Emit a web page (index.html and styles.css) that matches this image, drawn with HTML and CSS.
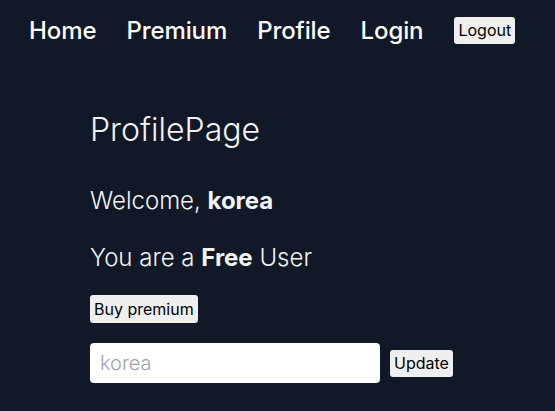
FILE: index.html
```html
<!DOCTYPE html>
<html>
<head>
<meta charset="utf-8">
<link rel="stylesheet" href="styles.css">
</head>
<body>
<nav class="nav">
  <a class="nav-link" href="#">Home</a>
  <a class="nav-link" href="#">Premium</a>
  <a class="nav-link" href="#">Profile</a>
  <a class="nav-link" href="#">Login</a>
  <button class="btn">Logout</button>
</nav>
<main class="profile">
  <h1 class="title">ProfilePage</h1>
  <p class="line">Welcome, <b>korea</b></p>
  <p class="line">You are a <b>Free</b> User</p>
  <div class="row"><button class="btn">Buy premium</button></div>
  <form class="form">
    <input class="input" type="text" placeholder="korea">
    <button class="btn" type="button">Update</button>
  </form>
</main>
</body>
</html>
```
FILE: styles.css
```css
html, body {
  margin: 0;
  background: #111827;
  color: #fff;
  font-family: Inter, "Noto Sans", sans-serif;
  height: 100%;
}
.nav {
  display: flex;
  align-items: center;
  gap: 30px;
  padding: 16px 29px;
}
.nav-link {
  color: #fff;
  text-decoration: none;
  font-size: 24px;
  line-height: 29px;
  font-weight: 500;
  letter-spacing: -0.1px;
}
.btn {
  font-family: Inter, sans-serif;
  font-size: 16px;
  background: #efefef;
  color: #000;
  border: none;
  border-radius: 3px;
  padding: 0 4px;
  height: 27px;
  line-height: 27px;
}
.nav .btn { margin-left: 1px; }
.profile {
  padding: 49px 90px 0;
  color: #f3f4f6;
}
.title {
  font-size: 32px;
  line-height: 40px;
  font-weight: 300;
  margin: 0 0 35px;
}
.line {
  font-size: 24px;
  line-height: 32px;
  font-weight: 300;
  margin: 0 0 25px;
}
.line + .line { margin-bottom: 21px; }
.line b { font-weight: 700; }
.row .btn { height: 28px; }
.form {
  display: flex;
  align-items: center;
  gap: 10px;
  margin-top: 20px;
}
.input {
  width: 290px;
  height: 40px;
  box-sizing: border-box;
  border: none;
  border-radius: 4px;
  padding: 0 10px;
  font-family: Inter, sans-serif;
  font-size: 20px;
  font-weight: 300;
}
.input::placeholder { color: #a3a3b0; }
```
